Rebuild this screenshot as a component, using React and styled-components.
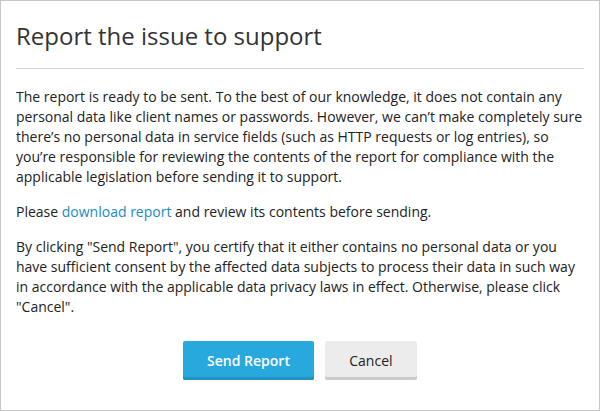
import React from "react";
import styled, { createGlobalStyle } from "styled-components";

const Global = createGlobalStyle`
  html, body { margin: 0; padding: 0; background: #fff; }
  body { font-family: "Open Sans", "Liberation Sans", sans-serif; }
  * { box-sizing: border-box; }
`;

const Dialog = styled.div`
  width: 600px;
  height: 411px;
  border: 1px solid #c6c6c6;
  background: #fff;
  padding: 0 15px;
  display: flex;
  flex-direction: column;
`;

const Title = styled.h1`
  margin: 0;
  padding: 19px 0 16px;
  font-size: 24px;
  line-height: 32px;
  font-weight: 400;
  color: #333;
  border-bottom: 1px solid #d3d3db;
`;

const Body = styled.div`
  padding-top: 18px;
  display: flex;
  flex-direction: column;
  gap: 15px;
`;

const Paragraph = styled.p`
  margin: 0;
  font-size: 14px;
  line-height: 20px;
  color: #222;
`;

const Link = styled.a`
  color: #1a8bc4;
  text-decoration: none;
`;

const Actions = styled.div`
  display: flex;
  justify-content: center;
  gap: 11px;
  margin-top: 24px;
`;

const Button = styled.button`
  height: 39px;
  min-width: ${(p) => (p.$primary ? "130px" : "92px")};
  padding: 0 24px;
  border: none;
  border-radius: 2px;
  font-family: "Open Sans", "Liberation Sans", sans-serif;
  font-size: 14px;
  font-weight: ${(p) => (p.$primary ? 600 : 400)};
  cursor: pointer;
  background: ${(p) => (p.$primary ? "#28a9de" : "#ececec")};
  color: ${(p) => (p.$primary ? "#fff" : "#222")};
  box-shadow: inset 0 -3px 0 ${(p) => (p.$primary ? "#2192c2" : "#cbcbcb")};
`;

export default function App() {
  return (
    <>
      <Global />
      <Dialog>
        <Title>Report the issue to support</Title>
        <Body>
          <Paragraph>
            The report is ready to be sent. To the best of our knowledge, it does not contain any
            personal data like client names or passwords. However, we can’t make completely sure
            there’s no personal data in service fields (such as HTTP requests or log entries), so
            you’re responsible for reviewing the contents of the report for compliance with the
            applicable legislation before sending it to support.
          </Paragraph>
          <Paragraph>
            Please <Link href="#">download report</Link> and review its contents before sending.
          </Paragraph>
          <Paragraph>
            By clicking "Send Report", you certify that it either contains no personal data or you
            have sufficient consent by the affected data subjects to process their data in such way
            in accordance with the applicable data privacy laws in effect. Otherwise, please click
            "Cancel".
          </Paragraph>
        </Body>
        <Actions>
          <Button $primary>Send Report</Button>
          <Button>Cancel</Button>
        </Actions>
      </Dialog>
    </>
  );
}
